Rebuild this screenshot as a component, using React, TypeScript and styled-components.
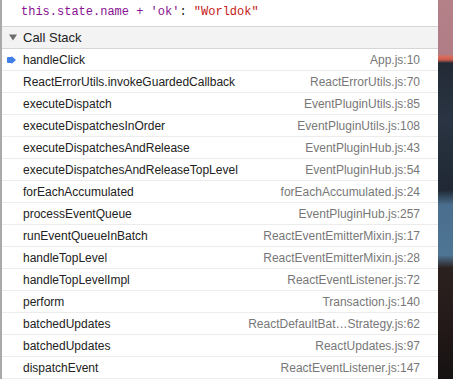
import React from 'react';
import styled, { createGlobalStyle } from 'styled-components';

interface Frame {
  name: string;
  location: string;
  current?: boolean;
}

const frames: Frame[] = [
  { name: 'handleClick', location: 'App.js:10', current: true },
  { name: 'ReactErrorUtils.invokeGuardedCallback', location: 'ReactErrorUtils.js:70' },
  { name: 'executeDispatch', location: 'EventPluginUtils.js:85' },
  { name: 'executeDispatchesInOrder', location: 'EventPluginUtils.js:108' },
  { name: 'executeDispatchesAndRelease', location: 'EventPluginHub.js:43' },
  { name: 'executeDispatchesAndReleaseTopLevel', location: 'EventPluginHub.js:54' },
  { name: 'forEachAccumulated', location: 'forEachAccumulated.js:24' },
  { name: 'processEventQueue', location: 'EventPluginHub.js:257' },
  { name: 'runEventQueueInBatch', location: 'ReactEventEmitterMixin.js:17' },
  { name: 'handleTopLevel', location: 'ReactEventEmitterMixin.js:28' },
  { name: 'handleTopLevelImpl', location: 'ReactEventListener.js:72' },
  { name: 'perform', location: 'Transaction.js:140' },
  { name: 'batchedUpdates', location: 'ReactDefaultBat…Strategy.js:62' },
  { name: 'batchedUpdates', location: 'ReactUpdates.js:97' },
  { name: 'dispatchEvent', location: 'ReactEventListener.js:147' },
];

const GlobalStyle = createGlobalStyle`
  html, body {
    margin: 0;
    padding: 0;
    overflow: hidden;
  }
  body {
    font-family: "Liberation Sans", Arial, sans-serif;
  }
`;

const Screen = styled.div`
  display: flex;
  width: 453px;
  height: 379px;
  overflow: hidden;
`;

const Panel = styled.div`
  width: 436px;
  background: #fff;
  border-left: 2px solid #a9a9a9;
  display: flex;
  flex-direction: column;
`;

const Wallpaper = styled.div`
  flex: 1;
  background: linear-gradient(
    to bottom,
    #b48189 0px,
    #b07c86 54px,
    #dd6a58 57px,
    #c45a4e 60px,
    #222a36 63px,
    #2a3442 120px,
    #1f2834 190px,
    #4a6f8e 205px,
    #4f7594 255px,
    #2b211f 268px,
    #241a19 320px,
    #161212 379px
  );
`;

const WatchLine = styled.div`
  height: 27px;
  box-sizing: border-box;
  padding: 5px 0 0 19px;
  font-family: "Liberation Mono", "DejaVu Sans Mono", monospace;
  font-size: 12px;
  line-height: 15px;
  color: #222;
  border-bottom: 1px solid #d6d6d6;
  white-space: nowrap;
`;

const Expr = styled.span`
  color: #881391;
`;

const StringValue = styled.span`
  color: #c41a16;
`;

const SectionHeader = styled.div`
  height: 21px;
  display: flex;
  align-items: center;
  gap: 6px;
  padding-left: 7px;
  background: #f3f3f3;
  border-bottom: 1px solid #d6d6d6;
  font-size: 13px;
  color: #222;
`;

const Row = styled.div`
  height: 22px;
  box-sizing: border-box;
  display: flex;
  align-items: center;
  padding: 0 18px 0 5px;
  border-bottom: 1px solid #ececec;
  font-size: 12px;
  white-space: nowrap;
`;

const Marker = styled.span`
  width: 16px;
  flex: none;
  display: flex;
  align-items: center;
`;

const FnName = styled.span`
  color: #222;
  flex: 1;
`;

const Location = styled.span`
  color: #777;
`;

const Triangle = () => (
  <svg width="8" height="7" viewBox="0 0 8 7">
    <path d="M0 0.5 L8 0.5 L4 6.5 Z" fill="#6e6e6e" />
  </svg>
);

const CurrentArrow = () => (
  <svg width="9" height="8" viewBox="0 0 9 8">
    <path d="M0 2 Q0 1 1 1 L4.5 1 L4.5 0 L9 4 L4.5 8 L4.5 7 L1 7 Q0 7 0 6 Z" fill="#3f7fe6" />
  </svg>
);

export default function App() {
  return (
    <>
      <GlobalStyle />
      <Screen>
        <Panel>
          <WatchLine>
            <Expr>this.state.name + 'ok'</Expr>: <StringValue>"Worldok"</StringValue>
          </WatchLine>
          <SectionHeader>
            <Triangle />
            <span>Call Stack</span>
          </SectionHeader>
          {frames.map((f, i) => (
            <Row key={i}>
              <Marker>{f.current && <CurrentArrow />}</Marker>
              <FnName>{f.name}</FnName>
              <Location>{f.location}</Location>
            </Row>
          ))}
        </Panel>
        <Wallpaper />
      </Screen>
    </>
  );
}
